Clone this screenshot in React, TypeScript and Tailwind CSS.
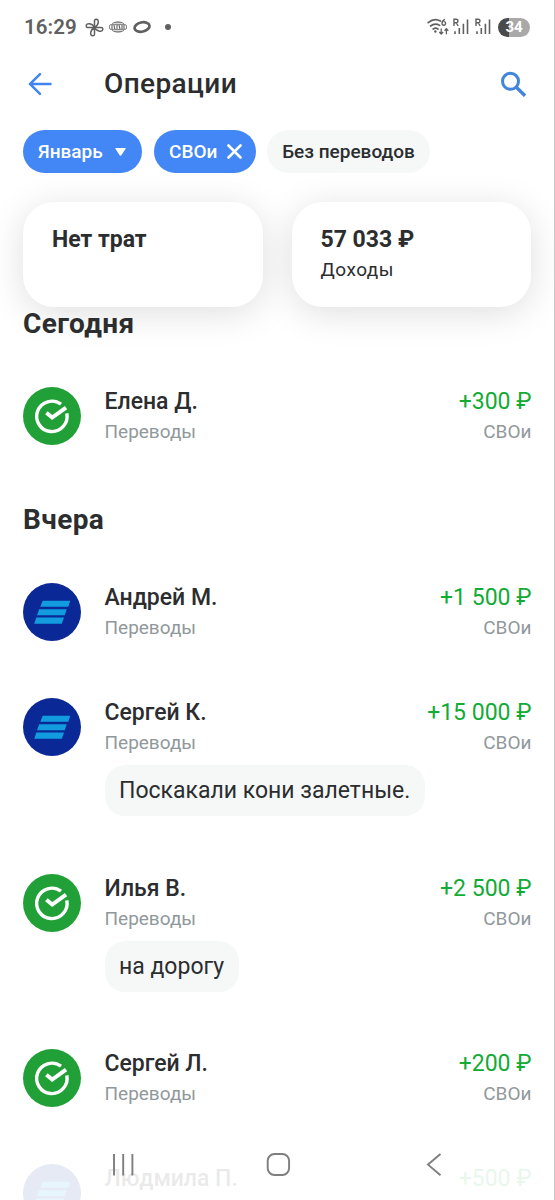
import React from 'react';

type Bank = 'sber' | 'veb';

interface Operation {
    name: string;
    amount: string;
    bank: Bank;
    category?: string;
    account?: string;
    comment?: string;
}

interface Section {
    title: string;
    operations: Operation[];
}

const sections: Section[] = [
    {
        title: 'Сегодня',
        operations: [{ name: 'Елена Д.', amount: '+300 ₽', bank: 'sber', category: 'Переводы', account: 'СВОи' }],
    },
    {
        title: 'Вчера',
        operations: [
            { name: 'Андрей М.', amount: '+1 500 ₽', bank: 'veb', category: 'Переводы', account: 'СВОи' },
            {
                name: 'Сергей К.',
                amount: '+15 000 ₽',
                bank: 'veb',
                category: 'Переводы',
                account: 'СВОи',
                comment: 'Поскакали кони залетные.',
            },
            { name: 'Илья В.', amount: '+2 500 ₽', bank: 'sber', category: 'Переводы', account: 'СВОи', comment: 'на дорогу' },
            { name: 'Сергей Л.', amount: '+200 ₽', bank: 'sber', category: 'Переводы', account: 'СВОи' },
            { name: 'Людмила П.', amount: '+500 ₽', bank: 'veb' },
        ],
    },
];

const BankLogo: React.FC<{ bank: Bank }> = ({ bank }) => {
    if (bank === 'sber') {
        return (
            <svg className="size-[58px] shrink-0" viewBox="0 0 58 58" fill="none">
                <circle cx="29" cy="29" r="29" fill="#22a038" />
                <path d="M38 17.2A15.2 15.2 0 1 0 43.8 26.4" stroke="white" strokeWidth="3.4" />
                <path d="M23.4 25.8L29.2 30.6L43 20.7" stroke="white" strokeWidth="4" />
            </svg>
        );
    }
    return (
        <svg className="size-[58px] shrink-0" viewBox="0 0 58 58">
            <circle cx="29" cy="29" r="29" fill="#0a2896" />
            <path d="M19.7 17.7H47.3L45.3 23.7H17.3ZM16.2 26.2H43.7L41.7 32.2H14ZM13.4 34.6H41L38.8 40.7H11.2Z" fill="#129cdf" />
        </svg>
    );
};

const Signal: React.FC = () => (
    <svg className="h-[18px] w-4" viewBox="0 0 16 18" fill="none" stroke="#606060">
        <path d="M1 8V1.2H3.2Q5 1.2 5 3Q5 4.7 3.2 4.7H1M3.2 4.7L5.2 8" strokeWidth="1.4" />
        <path d="M2 13.2V16M6.3 10V16M10.4 5.7V16M14.5 1.5V16" strokeWidth="1.6" />
    </svg>
);

const StatusBar: React.FC = () => (
    <div className="flex h-[54px] items-center justify-between pr-6 pl-6 text-[#606060]">
        <div className="flex items-center">
            <span className="w-[52px] text-[20.5px] font-semibold tracking-[0.1px] whitespace-nowrap">16:29</span>
            <svg className="ml-[9px] size-[19px]" viewBox="0 0 19 19" fill="none" stroke="currentColor" strokeWidth="1.5" strokeLinejoin="round">
                <path d="M9.5 9.5V3.4Q9.3 1.2 11.3 1.2Q13.6 1.3 13.2 4.6Q12.6 8 9.5 9.5Z" />
                <path d="M9.5 9.5H15.6Q17.8 9.3 17.8 11.3Q17.7 13.6 14.4 13.2Q11 12.6 9.5 9.5Z" />
                <path d="M9.5 9.5V15.6Q9.7 17.8 7.7 17.8Q5.4 17.7 5.8 14.4Q6.4 11 9.5 9.5Z" />
                <path d="M9.5 9.5H3.4Q1.2 9.7 1.2 7.7Q1.3 5.4 4.6 5.8Q8 6.4 9.5 9.5Z" />
            </svg>
            <svg className="ml-[5px] h-3.5 w-[18px]" viewBox="0 0 18 14" fill="none" stroke="currentColor">
                <path d="M3 3.6Q9 0 15 3.6M3 10.4Q9 14 15 10.4M5 2.8H13M5 11.2H13" strokeWidth="0.8" />
                <rect x="0.5" y="4.6" width="17" height="4.8" rx="1.5" strokeWidth="0.8" />
                <path d="M3 5V9M5 5L5.7 9M8 5V9M10 5L11 9M13 5V9M15 5V9" strokeWidth="1.1" />
            </svg>
            <svg className="ml-[5px] h-4 w-5" viewBox="0 0 20 16" fill="none" stroke="currentColor">
                <ellipse cx="10" cy="8" rx="7.6" ry="4.6" transform="rotate(-12 10 8)" strokeWidth="2.8" />
            </svg>
            <span className="ml-[13px] size-1.5 rounded-full bg-[#606060]" />
        </div>
        <div className="flex items-center">
            <svg className="h-[18px] w-[23px]" viewBox="0 0 23 18" fill="none" stroke="currentColor">
                <path d="M1.2 4.6Q7.2 -0.6 13.4 3M3.6 8Q8 4.5 12.7 7.4M6.2 11Q8.6 9.4 11 11" strokeWidth="1.7" strokeLinecap="round" />
                <circle cx="8.4" cy="13.5" r="1.2" fill="currentColor" stroke="none" />
                <path d="M18 1.4Q15 2.3 15 5.2A1.8 1.8 0 1 0 16.6 3.6" strokeWidth="1.4" />
                <path d="M14.2 10.5V15.7M12.3 14L14.2 16L16.1 14M19.4 16.2V11M17.5 12.8L19.4 10.8L21.3 12.8" strokeWidth="1.3" />
            </svg>
            <span className="ml-[3px] flex gap-[6px]">
                <Signal />
                <Signal />
            </span>
            <span className="ml-[7px] flex h-[19px] w-8 items-center justify-center rounded-full bg-linear-to-r from-[#4a4a4a] from-34% to-[#a9a9a9] to-34% text-[15px] font-bold text-white">
                34
            </span>
        </div>
    </div>
);

const OperationRow: React.FC<{ operation: Operation }> = ({ operation }) => (
    <li className="flex gap-[23.5px]">
        <BankLogo bank={operation.bank} />
        <div className="min-w-0 flex-1">
            <div className="flex h-[58px] flex-col">
                <div className="flex justify-between text-[23px] leading-[30px]">
                    <span className="font-medium">{operation.name}</span>
                    <span className="text-[#12ab35]">{operation.amount}</span>
                </div>
                {operation.category && (
                    <div className="flex justify-between text-[19px] leading-[30px] text-[#91989b]">
                        <span>{operation.category}</span>
                        <span>{operation.account}</span>
                    </div>
                )}
            </div>
            {operation.comment && (
                <div className="mt-[9px] mb-[0.5px] flex h-[51px] w-fit items-center rounded-[20px] bg-[#f6f8f8] px-[14.5px] pt-0.5 text-[23px]">
                    {operation.comment}
                </div>
            )}
        </div>
    </li>
);

const BottomNav: React.FC = () => (
    <nav className="absolute inset-x-0 bottom-0 h-[70px] bg-white/90">
        <svg className="h-full w-full" viewBox="0 0 554 70" fill="none" stroke="#7e7e7e" strokeWidth="1.9">
            <path d="M114 24V45.5M123.2 24V45.5M132.4 24V45.5" />
            <rect x="267.7" y="24" width="21.4" height="21" rx="6.8" />
            <path d="M440.5 24L428 34.6L440.5 45.3" />
        </svg>
    </nav>
);

export default function App() {
    return (
        <div className="relative h-[1200px] w-[555px] overflow-hidden border-r border-[#c8c8c8] bg-white font-[Roboto,sans-serif] text-[#2b2d2f]">
            <StatusBar />

            <header className="flex h-[60px] items-center pr-[28px] pl-[28px]">
                <svg className="h-6 w-6" viewBox="0 0 24 24" fill="none" stroke="#4285ee" strokeWidth="2.5" strokeLinecap="round">
                    <path d="M22.5 12H2M12 2.2L2 12L12 21.8" />
                </svg>
                <h1 className="ml-[52px] flex-1 text-[28px] font-medium tracking-[0.4px]">Операции</h1>
                <svg className="h-[26px] w-[26px]" viewBox="0 0 26 26" fill="none" stroke="#4285dc">
                    <circle cx="10.5" cy="10.3" r="8" strokeWidth="3" />
                    <path d="M16.3 16.2L25 24.7" strokeWidth="3.3" />
                </svg>
            </header>

            <div className="mt-4 flex gap-[11.5px] pl-[23px] text-[19px] font-medium">
                <button className="flex h-[43px] w-[119px] items-center justify-between rounded-full bg-[#4287f5] pt-px pr-4 pl-[15px] text-white">
                    Январь
                    <svg className="h-2 w-[11px]" viewBox="0 0 11 8" fill="white">
                        <path d="M0.8 0H10.2Q11 0 10.6 0.8L6.2 7.4Q5.5 8.2 4.8 7.4L0.4 0.8Q0 0 0.8 0Z" />
                    </svg>
                </button>
                <button className="flex h-[43px] w-[102px] items-center justify-between rounded-full bg-[#4287f5] pt-px pr-3.5 pl-[15.5px] text-white">
                    СВОи
                    <svg className="mb-px size-[15px]" viewBox="0 0 15 15" stroke="white" strokeWidth="2.6" strokeLinecap="round">
                        <path d="M1.5 1.5L13.5 13.5M13.5 1.5L1.5 13.5" />
                    </svg>
                </button>
                <button className="flex h-[43px] w-[163px] items-center justify-center rounded-full bg-[#f6f8f8] pt-px">Без переводов</button>
            </div>

            <div className="mt-[29px] flex gap-[29px] px-[23px]">
                <div className="h-[105px] w-60 rounded-[31px] bg-white px-[29px] pt-[23px] shadow-[0_6px_36px_rgba(0,0,0,0.13)]">
                    <div className="text-[23px] leading-[30px] font-bold">Нет трат</div>
                </div>
                <div className="h-[105px] w-60 rounded-[31px] bg-white px-[29px] pt-[23px] shadow-[0_6px_36px_rgba(0,0,0,0.13)]">
                    <div className="text-[23px] leading-[30px] font-bold">57 033 ₽</div>
                    <div className="text-[19px] leading-[30px] tracking-[0.5px]">Доходы</div>
                </div>
            </div>

            <main className="relative pr-[22.5px] pl-[23px]">
                {sections.map((section) => (
                    <section key={section.title} className="mb-[58px]">
                        <h2 className="h-20 pt-px text-[28px] leading-8 font-bold tracking-[0.4px]">{section.title}</h2>
                        <ul className="flex flex-col gap-[57px]">
                            {section.operations.map((operation) => (
                                <OperationRow key={operation.name} operation={operation} />
                            ))}
                        </ul>
                    </section>
                ))}
            </main>

            <BottomNav />
        </div>
    );
}
